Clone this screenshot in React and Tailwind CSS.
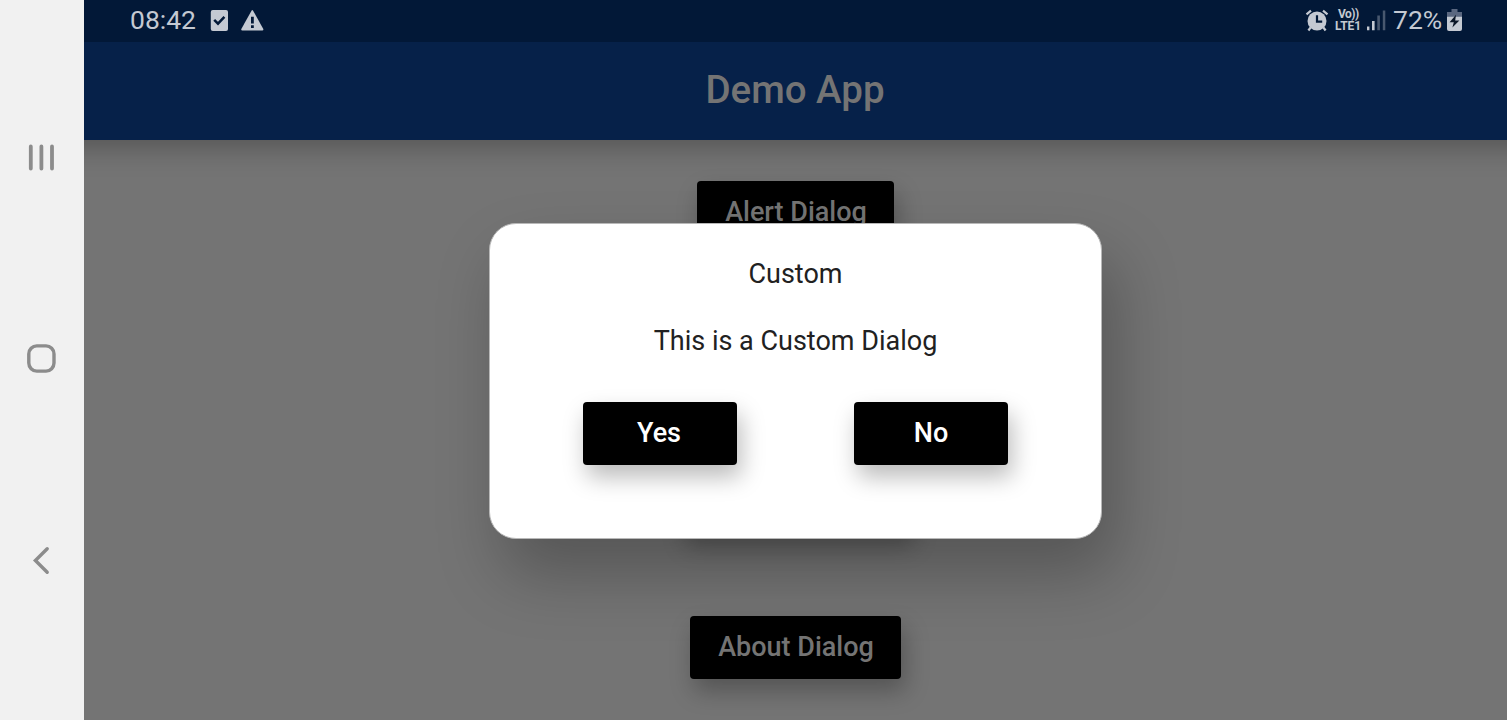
const buttonShadow = "shadow-[4px_12px_23px_rgba(0,0,0,0.27)]";

function PageButton({ label, width }) {
  return (
    <div
      className={`flex h-[63px] shrink-0 items-center justify-center rounded-[4px] bg-black pl-[1px] text-[27px] font-medium leading-none text-[#747474] ${buttonShadow} ${width}`}
    >
      {label}
    </div>
  );
}

function DialogButton({ label, nudge }) {
  return (
    <button
      className={`flex h-[63px] w-[154px] items-center justify-center rounded-[4px] bg-black text-[27px] font-medium leading-none text-white ${nudge} ${buttonShadow}`}
    >
      {label}
    </button>
  );
}

function NavigationRail() {
  return (
    <nav className="flex h-full w-[84px] shrink-0 flex-col items-center bg-[#f1f1f1] pt-[137px] pr-[2px]">
      <svg width="42" height="42" viewBox="0 0 42 42" fill="none" stroke="#8c8c8c" strokeWidth="3.8" strokeLinecap="round">
        <path d="M10.8 9.4v22.2M21.4 9.4v22.2M32 9.4v22.2" />
      </svg>
      <svg className="mt-[159px]" width="42" height="42" viewBox="0 0 42 42" fill="none" stroke="#8c8c8c" strokeWidth="3.4">
        <rect x="8.8" y="7.9" width="25.2" height="25.2" rx="8" />
      </svg>
      <svg className="mt-[160px]" width="42" height="42" viewBox="0 0 42 42" fill="none" stroke="#8c8c8c" strokeWidth="3.4" strokeLinecap="round" strokeLinejoin="miter">
        <path d="M27.2 8.8L15.4 20.5 27.2 32.2" />
      </svg>
    </nav>
  );
}

function StatusBar() {
  return (
    <div className="relative z-10 flex h-[42px] shrink-0 items-center justify-between bg-[#021837] pr-[45px] pb-[1px] pl-[46px] text-[#c4c9d2]">
      <div className="flex items-center">
        <span className="w-[81px] text-[26.5px] leading-none">08:42</span>
        <svg className="-ml-px" width="18" height="22" viewBox="0 0 18 22">
          <rect x="0.8" y="0" width="17.2" height="21" rx="2" fill="#c4c9d2" />
          <path d="M4.2 9.9l3.8 3.8 6.4-6.8" fill="none" stroke="#021837" strokeWidth="2.5" />
        </svg>
        <svg className="ml-[12px]" width="24" height="22" viewBox="0 0 24 22">
          <path d="M11.5 .7Q12.3-.5 13.1.7L23.3 18.9Q23.7 20.5 22.3 20.5H2.3Q.9 20.5 1.3 18.9Z" fill="#c4c9d2" />
          <path d="M11 6.7h2.8v6.9H11zM11 15.3h2.8V18H11z" fill="#021837" />
        </svg>
      </div>
      <div className="flex items-center">
        <svg className="-translate-x-px" width="24" height="24" viewBox="0 0 24 24" fill="none" stroke="#c4c9d2">
          <circle cx="12" cy="12" r="9.5" fill="#c4c9d2" stroke="none" />
          <path d="M1.5 5.4L6 1.6M18 1.6l4.5 3.8" strokeWidth="2.2" />
          <path d="M5.7 18.4L3.4 21.5M18.3 18.4l2.3 3.1" strokeWidth="2.3" />
          <path d="M12 6.3v6.3h5.2" stroke="#021837" strokeWidth="2.2" />
        </svg>
        <div className="ml-[5px] flex w-[29px] flex-col pb-[2px] text-[12px] leading-[12px] font-bold">
          <span className="pl-[3px] tracking-[-0.5px]">Vo))</span>
          <span>LTE1</span>
        </div>
        <svg className="ml-[2px]" width="20" height="22" viewBox="0 0 20 22" fill="#c4c9d2">
          <path d="M1 16.5h2.4v3.8H1zM6 11h2.6v9.3H6z" />
          <path d="M11.3 5.5h2.6v14.8h-2.6zM16.8.5h2.5v19.8h-2.5z" opacity=".36" />
        </svg>
        <span className="ml-[7px] w-[54px] text-[26.5px] leading-none">72%</span>
        <svg className="-translate-y-px" width="15" height="22" viewBox="0 0 15 22">
          <path d="M4.5 0h6v3H15v5H0V3h4.5z" fill="#5a6780" />
          <path d="M0 7.8h15V20q0 2-2 2H2q-2 0-2-2z" fill="#c4c9d2" />
          <path d="M9 5.8L2.6 13.2h4.2l-1.4 5.2L12.4 11.4H8.2z" fill="#0a1526" />
        </svg>
      </div>
    </div>
  );
}

function Dialog() {
  return (
    <section
      role="dialog"
      className="absolute top-[223px] left-[489px] flex h-[316px] w-[613px] flex-col items-center rounded-[27px] border border-[#b8b8b8] bg-white pt-[33px] text-[27px] text-[#212121] shadow-[13px_35px_64px_rgba(0,0,0,0.26)]"
    >
      <h2 className="leading-[34px]">Custom</h2>
      <p className="mt-[33px] leading-[34px]">This is a Custom Dialog</p>
      <div className="mt-[44px] flex gap-[117px]">
        <DialogButton label="Yes" nudge="pr-[2px]" />
        <DialogButton label="No" nudge="" />
      </div>
    </section>
  );
}

export default function App() {
  return (
    <div className="relative flex h-[720px] w-[1507px] overflow-hidden font-['Roboto',sans-serif]">
      <NavigationRail />
      <div className="flex min-w-0 flex-1 flex-col overflow-hidden bg-[#747474]">
        <StatusBar />
        <header className="-mx-8 flex h-[98px] shrink-0 items-center justify-center bg-[#062149] pr-[1px] pb-[2px] text-[38.5px] leading-none font-medium text-[#747474] shadow-[0_7px_26px_rgba(0,0,0,0.28)]">
          Demo App
        </header>
        <main className="flex flex-col items-center gap-[82px] pt-[41px]">
          <PageButton label="Alert Dialog" width="w-[197px]" />
          <PageButton width="w-[217px]" />
          <PageButton width="w-[227px]" />
          <PageButton label="About Dialog" width="w-[211px]" />
        </main>
      </div>
      <Dialog />
    </div>
  );
}
